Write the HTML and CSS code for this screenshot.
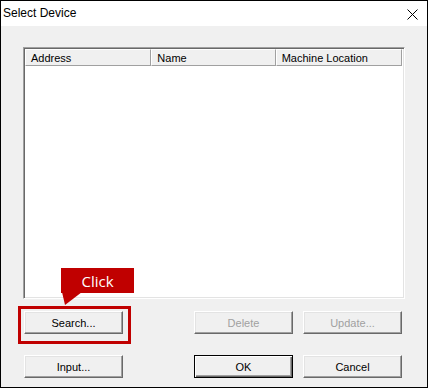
FILE: index.html
```html
<!DOCTYPE html>
<html>
<head>
<meta charset="utf-8">
<link rel="stylesheet" href="styles.css">
</head>
<body>
<div class="window">
  <div class="titlebar">
    <span class="title">Select Device</span>
    <svg class="close" width="11" height="11" viewBox="0 0 11 11"><path d="M0.5 0.5 L10.5 10.5 M10.5 0.5 L0.5 10.5" stroke="#000" stroke-width="1"/></svg>
  </div>
  <div class="content">
    <div class="list">
      <div class="header">
        <div class="col c1">Address</div>
        <div class="col c2">Name</div>
        <div class="col c3">Machine Location</div>
        <div class="col-rest"></div>
      </div>
    </div>
    <div class="row row1">
      <button class="btn first">Search...</button>
      <button class="btn disabled">Delete</button>
      <button class="btn disabled">Update...</button>
    </div>
    <div class="row row2">
      <button class="btn first">Input...</button>
      <button class="btn default">OK</button>
      <button class="btn">Cancel</button>
    </div>
  </div>
  <div class="highlight"></div>
  <div class="callout">Click</div>
  <svg class="tail" width="24" height="16" viewBox="0 0 24 16"><polygon points="0,0 20,0 3,13" fill="#c00000"/></svg>
</div>
</body>
</html>
```
FILE: styles.css
```css
html, body { margin: 0; padding: 0; }
body { width: 428px; height: 388px; overflow: hidden; background: #f0f0f0; }
.window {
  position: relative;
  width: 428px; height: 388px; box-sizing: border-box;
  border: 1px solid #000;
  background: #f0f0f0;
  font-family: "Liberation Sans", Arial, sans-serif;
  font-size: 11px; color: #000;
}
.titlebar {
  height: 25px; background: #fff;
  display: flex; align-items: center; justify-content: space-between;
  padding: 0 9px 0 2px;
}
.title { font-size: 12px; margin-top: -1px; }
.close { display: block; margin-top: 1px; }
.content { padding: 21px 0 0 22px; }
.list {
  width: 382px; height: 252px; box-sizing: border-box;
  background: #fff;
  border-top: 1px solid #a0a0a0; border-left: 1px solid #a0a0a0;
  border-right: 1px solid #fff; border-bottom: 1px solid #fff;
  box-shadow: inset 1px 1px 0 #696969, inset -1px -1px 0 #e3e3e3;
  padding: 1px 1px 0 1px;
}
.header { display: flex; height: 17px; }
.col {
  box-sizing: border-box; height: 17px;
  background: #f0f0f0;
  border-top: 1px solid #fff; border-left: 1px solid #fff;
  border-right: 1px solid #a0a0a0; border-bottom: 1px solid #a0a0a0;
  padding: 1px 0 0 5px; line-height: 14px;
  white-space: nowrap;
}
.c1 { width: 127px; }
.c2 { width: 125px; }
.c3 { width: 127px; }
.col-rest { flex: 1; border-left: 1px solid #fff; }
.row { display: flex; padding-left: 1px; }
.row1 { margin-top: 12px; }
.row2 { margin-top: 21px; }
.btn {
  flex: 0 0 99px;
  width: 99px; height: 23px; box-sizing: border-box; margin: 0 0 0 10px;
  padding: 0;
  font-family: "Liberation Sans", Arial, sans-serif; font-size: 11px; color: #000;
  background: #f0f0f0;
  border-top: 1px solid #fff; border-left: 1px solid #fff;
  border-right: 1px solid #696969; border-bottom: 1px solid #696969;
  box-shadow: inset -1px -1px 0 #a0a0a0, inset 1px 1px 0 #e3e3e3;
}
.btn.first { margin-left: 0; margin-right: 61px; }
.btn.disabled { color: #a0a0a0; }
.btn.default {
  border: 1px solid #000;
  box-shadow: inset 1px 1px 0 #fff, inset -1px -1px 0 #696969, inset -2px -2px 0 #a0a0a0;
}
.highlight {
  position: absolute; left: 17px; top: 305px;
  width: 113px; height: 38px; box-sizing: border-box;
  border: 3px solid #c00000;
}
.callout {
  position: absolute; left: 60px; top: 267px;
  width: 73px; height: 25px;
  background: #c00000; color: #fff;
  font-family: "Open Sans", "Noto Sans", sans-serif; font-size: 15px;
  display: flex; align-items: center; justify-content: center;
}
.tail { position: absolute; left: 61px; top: 291px; }
```
